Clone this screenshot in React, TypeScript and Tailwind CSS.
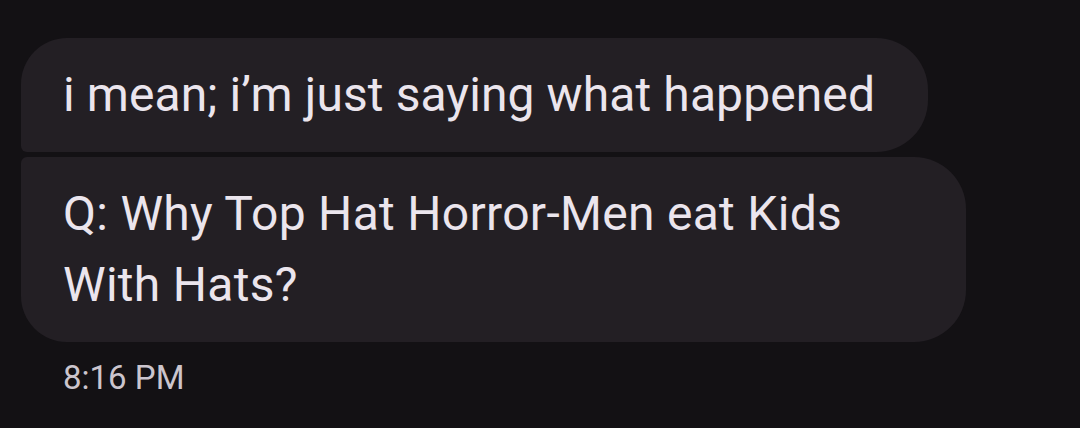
export default function App() {
  return (
    <div
      className="min-h-[428px] w-[1080px] bg-[#131114] pt-[38px] pl-[21px]"
      style={{ fontFamily: "Roboto, 'Noto Sans', sans-serif" }}
    >
      <div className="flex flex-col gap-[5px]">
        <div className="w-[907px] rounded-tl-[46px] rounded-bl-[6px] rounded-r-[52px] bg-[#231f24] pl-[42px] pt-[21px] pb-[22px] text-[48px] leading-[71px] tracking-[0.1px] text-[#ebe5ed]">
          i mean; i’m just saying what happened
        </div>
        <div className="w-[945px] rounded-tl-[6px] rounded-bl-[46px] rounded-r-[52px] bg-[#231f24] pl-[42px] pt-[21px] pb-[22px] text-[48px] leading-[71px] tracking-[0.3px] text-[#ebe5ed]">
          Q: Why Top Hat Horror-Men eat Kids
          <br />
          With Hats?
        </div>
      </div>
      <div className="mt-[16px] pl-[42px] text-[33px] leading-[40px] text-[#cbc5cd]">8:16 PM</div>
    </div>
  );
}
